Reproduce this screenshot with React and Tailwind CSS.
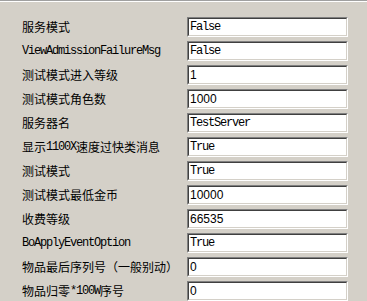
import React from "react";

const rows = [
  { label: [["c", "服务模式"]], value: "False", vf: "m" },
  { label: [["m", "ViewAdmissionFailureMsg"]], value: "False", vf: "m" },
  { label: [["c", "测试模式进入等级"]], value: "1", vf: "s" },
  { label: [["c", "测试模式角色数"]], value: "1000", vf: "s" },
  { label: [["c", "服务器名"]], value: "TestServer", vf: "m" },
  { label: [["c", "显示"], ["m", "1100X"], ["c", "速度过快类消息"]], value: "True", vf: "m" },
  { label: [["c", "测试模式"]], value: "True", vf: "m" },
  { label: [["c", "测试模式最低金币"]], value: "10000", vf: "s" },
  { label: [["c", "收费等级"]], value: "66535", vf: "s" },
  { label: [["m", "BoApplyEventOption"]], value: "True", vf: "m" },
  { label: [["c", "物品最后序列号（一般别动）"]], value: "0", vf: "s" },
  { label: [["c", "物品归零"], ["m", "*100W"], ["c", "序号"]], value: "0", vf: "s" },
];

function Seg({ kind, text }) {
  if (kind === "m") {
    return (
      <span className="font-['Liberation_Mono',monospace] text-[12px] tracking-[-1.2px]">
        {text}
      </span>
    );
  }
  return (
    <span className="font-['Noto_Sans_CJK_SC',sans-serif] text-[12px]">{text}</span>
  );
}

export default function App() {
  return (
    <div className="w-[367px] h-[301px] bg-[#d4d0c8] overflow-hidden">
      <div className="h-px bg-[#a0a0a0]" />
      <div className="h-px bg-[#ffffff]" />
      <div className="flex flex-col gap-1 pt-[15px]">
        {rows.map((r, i) => (
          <div key={i} className="flex items-center h-5">
            <div className="w-[187px] shrink-0 pl-[22px] text-black whitespace-nowrap leading-none flex items-center">
              {r.label.map(([k, t], j) => (
                <Seg key={j} kind={k} text={t} />
              ))}
            </div>
            <div className="w-[161px] shrink-0 h-5 border-t border-l border-t-[#808080] border-l-[#808080] border-b border-r border-b-white border-r-white">
              <div className="h-full bg-white border-t border-l border-t-[#404040] border-l-[#404040] border-b border-r border-b-[#d4d0c8] border-r-[#d4d0c8] flex items-center pl-[1px] leading-none text-black">
                {r.vf === "m" ? (
                  <span className="font-['Liberation_Mono',monospace] text-[12px] tracking-[-1.2px]">
                    {r.value}
                  </span>
                ) : (
                  <span className="font-['Liberation_Sans',sans-serif] text-[12px]">
                    {r.value}
                  </span>
                )}
              </div>
            </div>
          </div>
        ))}
      </div>
    </div>
  );
}
